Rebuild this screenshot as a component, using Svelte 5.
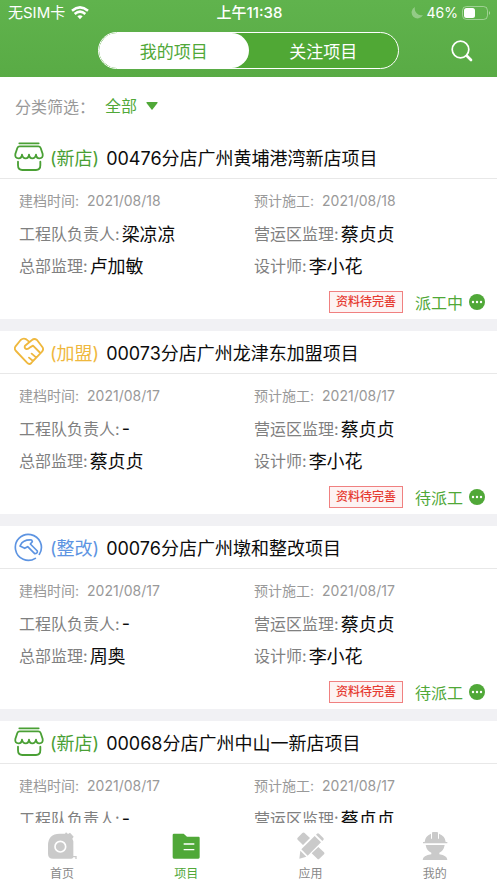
<script>
  let segment = $state('mine');
  let filter = $state('全部');
  const filters = ['全部', '新店', '加盟', '整改'];

  const projects = [
    { kind: 'shop', type: '新店', name: '00476分店广州黄埔港湾新店项目', filed: '2021/08/18', start: '2021/08/18', lead: '梁凉凉', area: '蔡贞贞', hq: '卢加敏', designer: '李小花', status: '派工中' },
    { kind: 'join', type: '加盟', name: '00073分店广州龙津东加盟项目', filed: '2021/08/17', start: '2021/08/17', lead: '-', area: '蔡贞贞', hq: '蔡贞贞', designer: '李小花', status: '待派工' },
    { kind: 'fix', type: '整改', name: '00076分店广州墩和整改项目', filed: '2021/08/17', start: '2021/08/17', lead: '-', area: '蔡贞贞', hq: '周奥', designer: '李小花', status: '待派工' },
    { kind: 'shop', type: '新店', name: '00068分店广州中山一新店项目', filed: '2021/08/17', start: '2021/08/17', lead: '-', area: '蔡贞贞', hq: '-', designer: '李小花', status: '待派工' }
  ];
  const shown = $derived(filter === '全部' ? projects : projects.filter((p) => p.type === filter));
</script>

<div class="app">
  <header>
    <div class="status">
      <div class="carrier">
        <span>无SIM卡</span>
        <svg width="18" height="14" viewBox="0 0 54 42" fill="none" stroke="#fff" stroke-width="7.5" aria-hidden="true">
          <path d="M3 14Q27-6 51 14" /><path d="M11 24Q27 10 43 24" /><path d="M19 31Q27 25 35 31L27 40Z" fill="#fff" stroke="none" />
        </svg>
      </div>
      <strong>上午11:38</strong>
      <div class="power">
        <svg width="12" height="12" viewBox="0 0 12 12" aria-hidden="true"><path d="M4 0a6 6 0 1 0 8 8A6.500 6.500 0 0 1 4 0Z" fill="#fff" fill-opacity=".33" /></svg>
        <span>46%</span>
        <svg width="29" height="14" viewBox="0 0 29 14" aria-hidden="true">
          <rect x=".5" y=".5" width="25" height="13" rx="4" fill="none" stroke="#fff" stroke-opacity=".4" />
          <rect x="2" y="2" width="11" height="10" rx="2.500" fill="#fff" /><path d="M27 5q2 2 0 4Z" fill="#fff" fill-opacity=".5" />
        </svg>
      </div>
    </div>
    <div class="bar">
      <div class="segments">
        <button class:active={segment === 'mine'} onclick={() => (segment = 'mine')}>我的项目</button>
        <button class:active={segment === 'followed'} onclick={() => (segment = 'followed')}>关注项目</button>
      </div>
      <button class="search" aria-label="搜索">
        <svg width="22" height="22" viewBox="0 0 22 22" fill="none" stroke="#fff" stroke-linecap="round"><circle cx="9.500" cy="9.500" r="8.300" stroke-width="1.700" /><path d="m16 16 4 4" stroke-width="2.700" /></svg>
      </button>
    </div>
  </header>

  <main>
    <div class="filter">
      <label for="category">分类筛选：</label>
      <div class="picker">
        <select id="category" bind:value={filter}>
          {#each filters as f}<option>{f}</option>{/each}
        </select>
        <svg width="12" height="8" viewBox="0 0 12 8" aria-hidden="true"><path d="M1 0h10q1 0 .5 1L6.500 7.500q-.5.500-1 0L.5 1Q0 0 1 0Z" fill="#50a838" /></svg>
      </div>
    </div>

    {#each shown as p}
      <article>
        <h2 class={p.kind}>
          {#if p.kind === 'shop'}
            <svg width="30" height="30" viewBox="0 0 90 90" fill="none" stroke="currentColor" stroke-width="5.500" stroke-linecap="round" stroke-linejoin="round" aria-hidden="true">
              <path d="M16 4H74" />
              <path d="M17 13H73Q78 13 80 18L86 36Q88 49 76 49Q67 49 66 38Q64 49 55 49Q46 49 45 38Q44 49 35 49Q26 49 24 38Q23 49 14 49Q2 49 4 36L10 18Q12 13 17 13Z" />
              <path d="M12 59V70Q12 84 25 84H66Q79 84 79 70V59" />
            </svg>
          {:else if p.kind === 'join'}
            <svg width="30" height="30" viewBox="0 0 90 90" fill="none" stroke="currentColor" stroke-width="5.500" stroke-linecap="round" stroke-linejoin="round" aria-hidden="true">
              <path d="M45 14L37 7Q28 2 20 9L4 29Q0 36 6 42L39 77Q46 84 52 78L57 72L45 62M57 72L67 62L53 50M67 62L84 44Q90 37 85 30L69 9Q61 3 54 9L33 26Q30 34 37 36Q42 37 48 31L57 26L76 45" />
            </svg>
          {:else}
            <svg width="30" height="30" viewBox="0 0 90 90" fill="none" stroke="currentColor" stroke-width="5" stroke-linecap="round" stroke-linejoin="round" aria-hidden="true">
              <path d="M76 67A39 39 0 1 0 64 79" />
              <path d="M18 42Q23 31 30 28Q39 23 53 24L55 29L49 36L70 57Q71 65 62 65L41 44L32 49Z" />
            </svg>
          {/if}
          <span class="type">({p.type})</span>
          <span class="name">{p.name}</span>
        </h2>
        <dl>
          <div class="date"><dt>建档时间:</dt><dd>{p.filed}</dd></div>
          <div class="date"><dt>预计施工:</dt><dd>{p.start}</dd></div>
          <div><dt>工程队负责人:</dt><dd>{p.lead}</dd></div>
          <div><dt>营运区监理:</dt><dd>{p.area}</dd></div>
          <div><dt>总部监理:</dt><dd>{p.hq}</dd></div>
          <div><dt>设计师:</dt><dd>{p.designer}</dd></div>
        </dl>
        <footer>
          <span class="tag">资料待完善</span>
          <button class="more">
            {p.status}
            <svg width="16" height="16" viewBox="0 0 16 16" aria-hidden="true"><circle cx="8" cy="8" r="8" fill="#50a838" /><g fill="#fff"><circle cx="4" cy="8" r="1.200" /><circle cx="8" cy="8" r="1.200" /><circle cx="12" cy="8" r="1.200" /></g></svg>
          </button>
        </footer>
      </article>
    {/each}
  </main>

  <nav>
    <a href="#home">
      <svg width="30" height="28" viewBox="0 0 90 84" aria-hidden="true">
        <path d="M3 40Q3 6 38 5H54L57 1L63 6L69 2L80 14L76 20L79 28V72H89V81H85V76H79Q78 80 73 80H18Q3 80 3 65Z" fill="#cacaca" /><circle cx="40" cy="44" r="16" fill="none" stroke="#fff" stroke-width="5" />
      </svg>
      首页
    </a>
    <a href="#projects" class="current" aria-current="page">
      <svg width="30" height="28" viewBox="0 0 90 84" aria-hidden="true">
        <path d="M9 5H38L48 14H83Q86 14 86 18V76Q86 80 82 80H9Q5 80 5 76V9Q5 5 9 5Z" fill="#50a838" /><path d="M38 36H70M38 53H70" stroke="#fff" stroke-width="4" />
      </svg>
      项目
    </a>
    <a href="#apps">
      <svg width="30" height="28" viewBox="0 0 90 84" fill="#cacaca" aria-hidden="true">
        <path d="M25 2L42 18L21 39L5 23Q2 20 5 17L19 3Q22 0 25 2ZM67 45L84 61Q87 64 84 67L70 80Q67 83 64 80L47 64ZM16 52L56 12L75 31L35 71ZM13 56L31 74L10 80ZM60 8L63 5Q66 2 69 5L82 18Q85 21 82 24L79 27Z" />
      </svg>
      应用
    </a>
    <a href="#me">
      <svg width="30" height="28" viewBox="0 0 90 84" fill="#cacaca" aria-hidden="true">
        <path d="M14 30Q15 12 33 5V20H36V1Q45-2 54 1V20H57V5Q76 12 77 30ZM9 30H82V34H9ZM17 39H74Q71 57 58 62V67Q81 70 82 84H8Q9 70 34 67V62Q20 57 17 39Z" />
      </svg>
      我的
    </a>
  </nav>
</div>

<style>
  :global(body) { margin: 0; }
  .app {
    display: flex;
    flex-direction: column;
    height: 100vh;
    overflow: hidden;
    background: #fff;
    color: #0c0c0c;
    font-family: Inter, "Noto Sans CJK SC", sans-serif;
    font-size: 16px;
  }
  button, select { padding: 0; border: 0; background: none; color: inherit; font: inherit; cursor: pointer; }
  svg { flex: none; }

  header { flex: none; background: linear-gradient(#60b34d, #59ab45); color: #fff; }
  .status { display: grid; grid-template-columns: 1fr auto 1fr; align-items: center; height: 26px; padding: 0 6px 0 8px; font-size: 15px; line-height: 24px; }
  .status strong { font-weight: 500; }
  .carrier, .power { display: flex; align-items: center; gap: 6px; }
  .power { justify-content: flex-end; gap: 4px; font-size: 14px; }
  .bar { display: grid; grid-template-columns: 1fr 301px 1fr; align-items: center; padding: 6px 0 8px; }
  .segments { grid-column: 2; display: flex; box-sizing: border-box; height: 37px; border: 1px solid #fff; border-radius: 19px; background: #50a835; overflow: hidden; }
  .segments button { flex: 1; border-radius: 18px; font-size: 17px; }
  .segments .active { background: #fff; color: #50a838; }
  .search { display: flex; justify-self: end; margin-right: 24px; }

  main { flex: 1; min-height: 0; overflow-y: auto; scrollbar-width: none; }
  .filter { display: flex; align-items: center; height: 57px; padding: 0 15px 2px; }
  .filter label { color: #999; }
  .picker { display: flex; align-items: center; gap: 8px; margin-left: 10px; color: #50a838; }
  select { appearance: none; }

  article { border-bottom: 12px solid #f1f1f4; }
  h2 { display: flex; align-items: center; height: 42px; margin: 0; padding: 0 14px; border-bottom: 1px solid #e8e8e8; font-size: 18px; font-weight: 400; white-space: nowrap; }
  .type { margin: 0 7px 0 6px; }
  .name { color: #0c0c0c; }
  .shop { color: #4aa035; }
  .join { color: #efb83e; }
  .fix { color: #5d94e2; }

  dl { display: grid; grid-template-columns: 1fr 1fr; margin: 0; padding: 6px 8px 0 19px; }
  dl div { display: flex; align-items: center; gap: 2px; height: 32px; white-space: nowrap; }
  dt { color: #808080; }
  dd { margin: 0; font-size: 18px; }
  dl .date { gap: 8px; height: 30px; padding-bottom: 2px; }
  .date dt, .date dd { color: #999; font-size: 14px; }

  footer { display: flex; align-items: center; justify-content: flex-end; gap: 12px; height: 34px; padding: 4px 12px 0; }
  .tag { box-sizing: border-box; height: 22px; padding: 0 6px; border: 1px solid #f08080; background: #fdf3f3; color: #e63c32; font-size: 12px; font-weight: 500; line-height: 20px; }
  .more { display: flex; align-items: center; gap: 6px; color: #50a838; }

  nav { flex: none; display: flex; height: 60px; background: #fff; }
  nav a { flex: 1; display: flex; flex-direction: column; align-items: center; gap: 5px; padding-top: 9px; color: #888; font-size: 12px; line-height: 18px; text-decoration: none; }
  nav .current { color: #50a838; }
</style>
